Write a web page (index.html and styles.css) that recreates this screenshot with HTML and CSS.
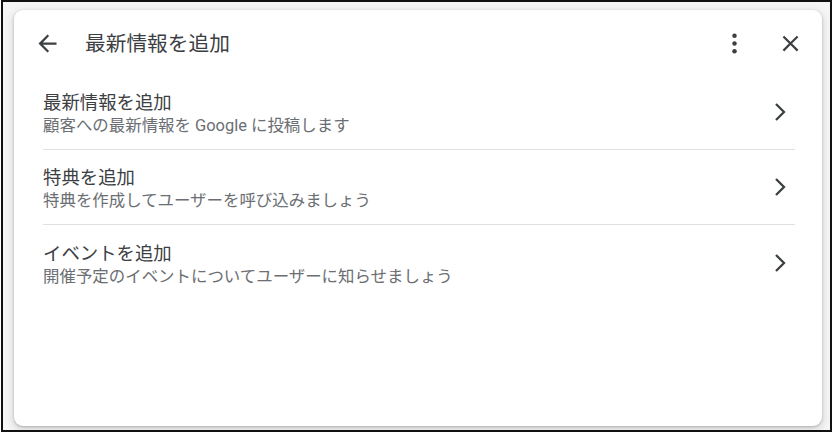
FILE: index.html
```html
<!DOCTYPE html>
<html lang="ja">
<head>
<meta charset="utf-8">
<title>最新情報を追加</title>
<link rel="stylesheet" href="styles.css">
</head>
<body>
<div class="frame">
  <div class="dialog">
    <div class="header">
      <button class="icon-btn back" aria-label="戻る">
        <svg viewBox="0 0 24 24" width="27" height="27"><path d="M20 11H7.830l5.590-5.590L12 4l-8 8 8 8 1.410-1.410L7.830 13H20v-2z"/></svg>
      </button>
      <h1 class="title">最新情報を追加</h1>
      <button class="icon-btn more" aria-label="その他">
        <svg viewBox="0 0 24 24" width="27" height="27"><circle cx="12" cy="5.2" r="2"/><circle cx="12" cy="12" r="2"/><circle cx="12" cy="18.8" r="2"/></svg>
      </button>
      <button class="icon-btn close" aria-label="閉じる">
        <svg viewBox="0 0 24 24" width="27" height="27"><path d="M19 6.41 17.59 5 12 10.59 6.41 5 5 6.41 10.59 12 5 17.59 6.41 19 12 13.41 17.59 19 19 17.59 13.41 12z"/></svg>
      </button>
    </div>
    <ul class="list">
      <li class="item">
        <div class="text">
          <div class="item-title">最新情報を追加</div>
          <div class="item-sub">顧客への最新情報を Google に投稿します</div>
        </div>
        <svg class="chev" viewBox="0 0 12 20" width="12" height="20"><polyline points="2,2 10,10 2,18"/></svg>
      </li>
      <li class="item">
        <div class="text">
          <div class="item-title">特典を追加</div>
          <div class="item-sub">特典を作成してユーザーを呼び込みましょう</div>
        </div>
        <svg class="chev" viewBox="0 0 12 20" width="12" height="20"><polyline points="2,2 10,10 2,18"/></svg>
      </li>
      <li class="item last">
        <div class="text">
          <div class="item-title">イベントを追加</div>
          <div class="item-sub">開催予定のイベントについてユーザーに知らせましょう</div>
        </div>
        <svg class="chev" viewBox="0 0 12 20" width="12" height="20"><polyline points="2,2 10,10 2,18"/></svg>
      </li>
    </ul>
  </div>
</div>
</body>
</html>
```

FILE: styles.css
```css
* { box-sizing: border-box; }
html, body {
  margin: 0;
  padding: 0;
  background: #ffffff;
}
body {
  font-family: Roboto, "Noto Sans CJK JP", sans-serif;
}
.frame {
  margin-left: 1px;
  width: 831px;
  height: 432px;
  border: 2px solid #111;
  background: #f6f6f6;
  padding: 8px 8px 4px 11px;
  display: flex;
}
.dialog {
  flex: 1;
  background: #fff;
  border-radius: 9px;
  box-shadow: 0 1px 3px rgba(0,0,0,0.22), 0 3px 8px 2px rgba(0,0,0,0.10);
  display: flex;
  flex-direction: column;
}
.header {
  height: 65px;
  display: flex;
  align-items: center;
  padding: 2px 18px 0 19px;
}
.icon-btn {
  width: 28px;
  height: 28px;
  padding: 0;
  margin: 0;
  border: 0;
  background: none;
  display: flex;
  align-items: center;
  justify-content: center;
  fill: #3c4043;
}
.title {
  margin: 0 0 0 24px;
  flex: 1;
  font-size: 20.7px;
  font-weight: 400;
  color: #3c4043;
  line-height: 28px;
}
.more { margin-right: 28px; }
.list {
  list-style: none;
  margin: 0;
  padding: 0 27px 0 29px;
}
.item {
  height: 75px;
  display: flex;
  align-items: center;
  border-bottom: 1px solid #dfe0e3;
}
.item.last { border-bottom: 0; }
.text {
  flex: 1;
  padding-top: 5px;
}
.item-title {
  font-size: 18.4px;
  line-height: 22px;
  color: #3c4043;
}
.item-sub {
  font-size: 16.45px;
  line-height: 23px;
  color: #6b6e72;
}
.chev {
  margin-right: 9px;
  fill: none;
  stroke: #3c4043;
  stroke-width: 2.3;
}
```
